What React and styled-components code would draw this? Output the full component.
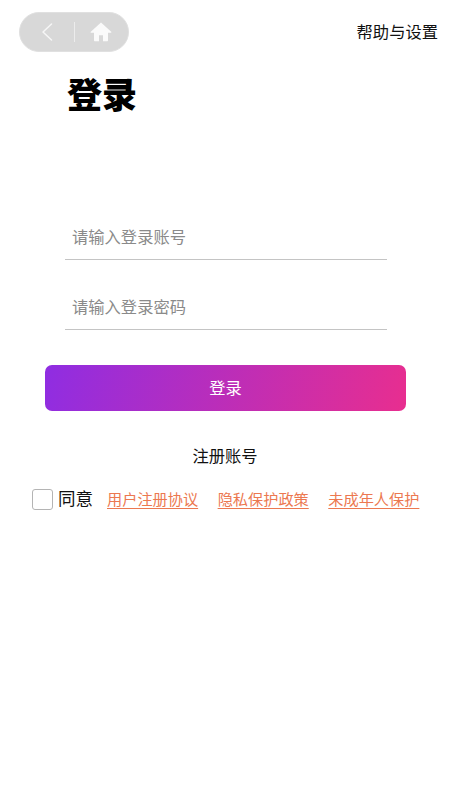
import styled, { createGlobalStyle } from "styled-components";

const GlobalStyle = createGlobalStyle`
  html, body {
    margin: 0;
    padding: 0;
    background: #fff;
    font-family: "Noto Sans CJK SC", "Liberation Sans", sans-serif;
  }
`;

const Page = styled.div`
  width: 450px;
  height: 800px;
  overflow: hidden;
  background: #fff;
`;

const TopBar = styled.div`
  display: flex;
  justify-content: space-between;
  align-items: center;
  padding: 12px 12px 0 19px;
`;

const Capsule = styled.div`
  width: 110px;
  height: 40px;
  box-sizing: border-box;
  display: flex;
  align-items: center;
  border-radius: 20px;
  background: #d8d8d8;
  border: 1px solid #e0e0e0;
`;

const CapsuleBtn = styled.div`
  flex: 1;
  display: flex;
  justify-content: center;
  align-items: center;
`;

const Divider = styled.div`
  width: 1px;
  height: 20px;
  background: #ececec;
`;

const HelpLink = styled.div`
  margin-bottom: 3px;
  font-size: 16.3px;
  color: #111;
`;

const Title = styled.h1`
  margin: 17px 0 0 67px;
  font-size: 35px;
  line-height: 48px;
  font-weight: 900;
  color: #000;
`;

const Form = styled.div`
  margin: 97px 0 0 65px;
  width: 322px;
  display: flex;
  flex-direction: column;
  gap: 24px;
`;

const Field = styled.div`
  height: 46px;
  box-sizing: border-box;
  display: flex;
  align-items: center;
  padding: 0 0 2px 7px;
  border-bottom: 1px solid #c4c4c4;
  font-size: 16.3px;
  color: #8a8a8a;
`;

const LoginButton = styled.div`
  margin: 35px 0 0 45px;
  width: 361px;
  height: 46px;
  box-sizing: border-box;
  padding-bottom: 2px;
  border-radius: 7px;
  display: flex;
  justify-content: center;
  align-items: center;
  background: linear-gradient(105deg, #8f2de2, #e82e8f);
  color: #fff;
  font-size: 16.3px;
`;

const Register = styled.div`
  margin-top: 32px;
  text-align: center;
  font-size: 16.3px;
  line-height: 24px;
  color: #111;
`;

const AgreeRow = styled.div`
  margin: 18px 0 0 32px;
  display: flex;
  align-items: center;
`;

const CheckBox = styled.div`
  width: 21px;
  height: 21px;
  margin-top: 4px;
  box-sizing: border-box;
  border: 1.5px solid #b4b4b4;
  border-radius: 3px;
`;

const AgreeText = styled.span`
  margin-left: 5px;
  margin-right: 14px;
  font-size: 17.5px;
  color: #111;
`;

const PolicyLink = styled.span`
  margin-right: 19.5px;
  font-size: 15.2px;
  color: #ec7850;
  text-decoration: underline;
  text-underline-offset: 3px;
`;

export default function App() {
  return (
    <Page>
      <GlobalStyle />
      <TopBar>
        <Capsule>
          <CapsuleBtn>
            <svg width="14" height="20" viewBox="0 0 14 20" fill="none">
              <path d="M11.5 2 3 10l8.500 8" stroke="#f6f6f6" strokeWidth="1.5" strokeLinecap="round" strokeLinejoin="round" />
            </svg>
          </CapsuleBtn>
          <Divider />
          <CapsuleBtn>
            <svg width="22" height="20" viewBox="0 0 22 20">
              <path d="M11 .5.8 9.800c-.4.4-.1 1 .4 1H4v7.500c0 .6.4 1 1 1h4v-6h4v6h4c.6 0 1-.4 1-1v-7.500h2.800c.5 0 .8-.6.4-1z" fill="#fafafa" />
            </svg>
          </CapsuleBtn>
        </Capsule>
        <HelpLink>帮助与设置</HelpLink>
      </TopBar>
      <Title>登录</Title>
      <Form>
        <Field>请输入登录账号</Field>
        <Field>请输入登录密码</Field>
      </Form>
      <LoginButton>登录</LoginButton>
      <Register>注册账号</Register>
      <AgreeRow>
        <CheckBox />
        <AgreeText>同意</AgreeText>
        <PolicyLink>用户注册协议</PolicyLink>
        <PolicyLink>隐私保护政策</PolicyLink>
        <PolicyLink>未成年人保护</PolicyLink>
      </AgreeRow>
    </Page>
  );
}
